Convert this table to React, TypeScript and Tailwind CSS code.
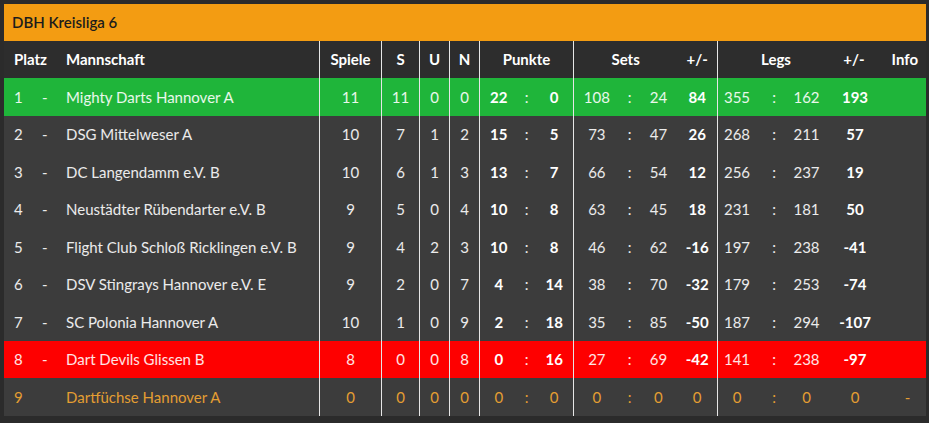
const rows = [
  { p: 1, team: 'Mighty Darts Hannover A', sp: 10 + 1, s: 11, u: 0, n: 0, pp: 22, pm: 0, sw: 108, sl: 24, sd: '84', lw: 355, ll: 162, ld: '193', kind: 'up' },
  { p: 2, team: 'DSG Mittelweser A', sp: 10, s: 7, u: 1, n: 2, pp: 15, pm: 5, sw: 73, sl: 47, sd: '26', lw: 268, ll: 211, ld: '57', kind: '' },
  { p: 3, team: 'DC Langendamm e.V. B', sp: 10, s: 6, u: 1, n: 3, pp: 13, pm: 7, sw: 66, sl: 54, sd: '12', lw: 256, ll: 237, ld: '19', kind: '' },
  { p: 4, team: 'Neustädter Rübendarter e.V. B', sp: 9, s: 5, u: 0, n: 4, pp: 10, pm: 8, sw: 63, sl: 45, sd: '18', lw: 231, ll: 181, ld: '50', kind: '' },
  { p: 5, team: 'Flight Club Schloß Ricklingen e.V. B', sp: 9, s: 4, u: 2, n: 3, pp: 10, pm: 8, sw: 46, sl: 62, sd: '-16', lw: 197, ll: 238, ld: '-41', kind: '' },
  { p: 6, team: 'DSV Stingrays Hannover e.V. E', sp: 9, s: 2, u: 0, n: 7, pp: 4, pm: 14, sw: 38, sl: 70, sd: '-32', lw: 179, ll: 253, ld: '-74', kind: '' },
  { p: 7, team: 'SC Polonia Hannover A', sp: 10, s: 1, u: 0, n: 9, pp: 2, pm: 18, sw: 35, sl: 85, sd: '-50', lw: 187, ll: 294, ld: '-107', kind: '' },
  { p: 8, team: 'Dart Devils Glissen B', sp: 8, s: 0, u: 0, n: 8, pp: 0, pm: 16, sw: 27, sl: 69, sd: '-42', lw: 141, ll: 238, ld: '-97', kind: 'down' },
  { p: 9, team: 'Dartfüchse Hannover A', sp: 0, s: 0, u: 0, n: 0, pp: 0, pm: 0, sw: 0, sl: 0, sd: '0', lw: 0, ll: 0, ld: '0', kind: 'none' },
];

const line = 'border-l border-[#e6e6e6]';

export default function App() {
  return (
    <div className="w-[929px] h-[423px] bg-[#2b2b2b] pt-[4px] pl-[4px] pr-[3px] font-['Lato','Liberation_Sans',sans-serif] text-[15px]">
      <div className="h-[37px] bg-[#f39c12] flex items-center pl-[8px] text-[#1c1c1c] font-semibold">
        DBH Kreisliga 6
      </div>

      <div className="flex h-[37px] bg-[#2d2d2d] text-white font-bold items-stretch">
        <div className="w-[315px] flex items-center pl-[10px]">
          <div className="w-[52px]">Platz</div>
          <div>Mannschaft</div>
        </div>
        <div className={`w-[62px] flex items-center justify-center ${line}`}>Spiele</div>
        <div className={`w-[38px] flex items-center justify-center ${line}`}>S</div>
        <div className={`w-[30px] flex items-center justify-center ${line}`}>U</div>
        <div className={`w-[30px] flex items-center justify-center ${line}`}>N</div>
        <div className={`w-[94px] flex items-center justify-center ${line}`}>Punkte</div>
        <div className={`w-[144px] flex items-center ${line}`}>
          <div className="w-[104px] text-center">Sets</div>
          <div className="w-[40px] text-center">+/-</div>
        </div>
        <div className={`flex-1 flex items-center ${line}`}>
          <div className="w-[116px] text-center">Legs</div>
          <div className="w-[40px] text-center">+/-</div>
          <div className="flex-1 text-right pr-[8px]">Info</div>
        </div>
      </div>

      {rows.map((r) => {
        const bg = r.kind === 'up' ? 'bg-[#1fb53a]' : r.kind === 'down' ? 'bg-[#fe0000]' : 'bg-[#3c3c3c]';
        const txt = r.kind === 'none' ? 'text-[#e49e32]' : 'text-white/90';
        const bold = r.kind === 'none' ? '' : 'font-bold text-white';
        return (
          <div key={r.p} className={`flex h-[37.5px] items-stretch ${bg} ${txt}`}>
            <div className="w-[315px] flex items-center pl-[10px]">
              <div className="w-[28px]">{r.p}</div>
              <div className="w-[24px]">{r.kind === 'none' ? '' : '-'}</div>
              <div>{r.team}</div>
            </div>
            <div className={`w-[62px] flex items-center justify-center ${line}`}>{r.sp}</div>
            <div className={`w-[38px] flex items-center justify-center ${line}`}>{r.s}</div>
            <div className={`w-[30px] flex items-center justify-center ${line}`}>{r.u}</div>
            <div className={`w-[30px] flex items-center justify-center ${line}`}>{r.n}</div>
            <div className={`w-[94px] flex items-center ${line}`}>
              <div className={`w-[38px] text-center ${bold}`}>{r.pp}</div>
              <div className="w-[18px] text-center">:</div>
              <div className={`w-[38px] text-center ${bold}`}>{r.pm}</div>
            </div>
            <div className={`w-[144px] flex items-center ${line}`}>
              <div className="w-[46px] text-center">{r.sw}</div>
              <div className="w-[20px] text-center">:</div>
              <div className="w-[38px] text-center">{r.sl}</div>
              <div className={`w-[40px] text-center ${bold}`}>{r.sd}</div>
            </div>
            <div className={`flex-1 flex items-center ${line}`}>
              <div className="w-[38px] text-center">{r.lw}</div>
              <div className="w-[36px] text-center">:</div>
              <div className="w-[29px] text-center">{r.ll}</div>
              <div className={`w-[68px] text-center ${bold}`}>{r.ld}</div>
              <div className="flex-1 text-center">{r.kind === 'none' ? '-' : ''}</div>
            </div>
          </div>
        );
      })}
    </div>
  );
}
